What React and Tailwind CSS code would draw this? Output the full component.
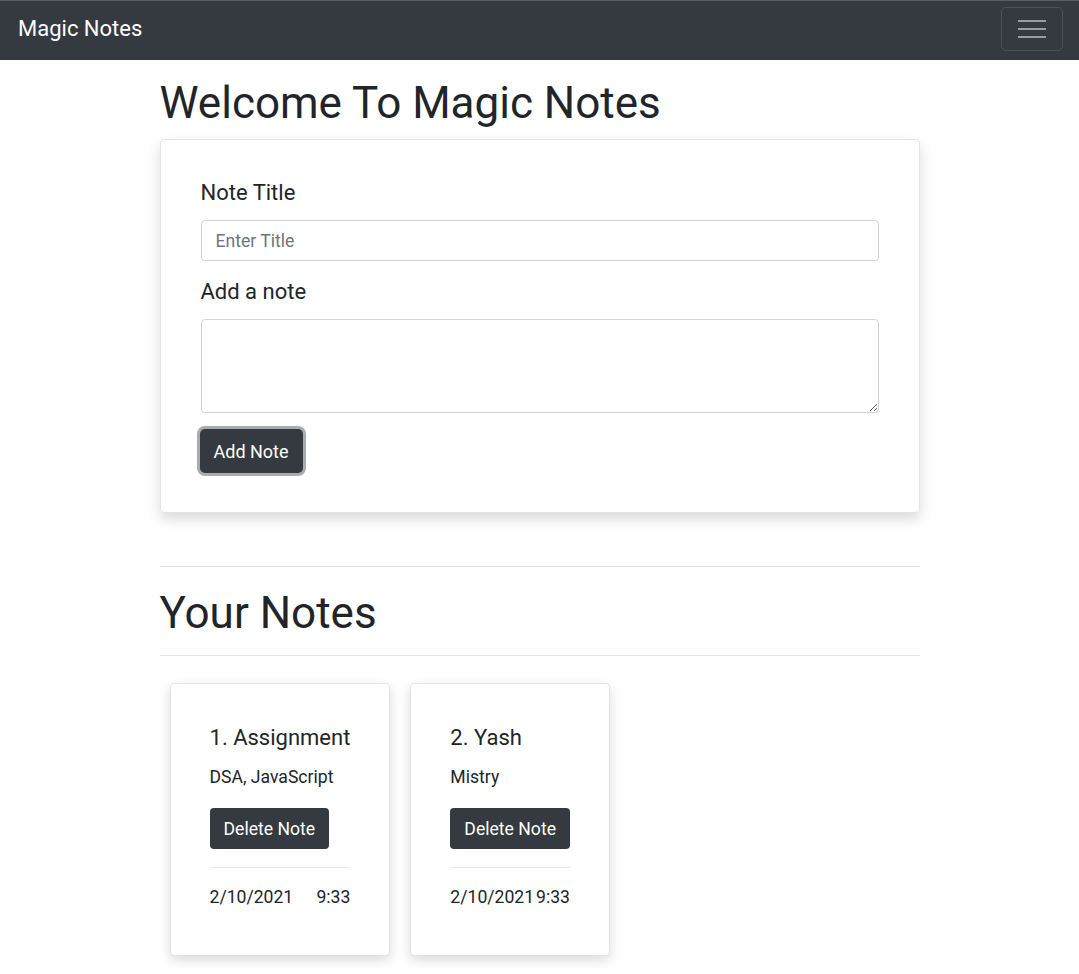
import React from 'react';

const notes = [
  { title: 'Assignment', body: 'DSA, JavaScript', date: '2/10/2021', time: '9:33' },
  { title: 'Yash', body: 'Mistry', date: '2/10/2021', time: '9:33' },
];

function NoteCard({ note, index }) {
  return (
    <div className="m-[10px] rounded-[4px] border border-[#e3e3e3] bg-white shadow-[0_4px_12px_rgba(0,0,0,0.15)] pl-[39px] pr-[39px] pt-[41px] pb-[45px]">
      <h5 className="text-[22px] leading-[26px] mb-[13px]">{index + 1}. {note.title}</h5>
      <p className="text-[17.6px] leading-[26px] mb-[18px]">{note.body}</p>
      <button className="h-[41px] px-[14px] rounded-[4px] bg-[#343a40] text-white text-[17.6px] leading-[26px]">Delete Note</button>
      <hr className="border-t border-[#e9e9e9] mt-[18px] mb-[16px]" />
      <div className="flex justify-between text-[17.6px] leading-[26px]">
        <span>{note.date}</span>
        <span>{note.time}</span>
      </div>
    </div>
  );
}

export default function App() {
  return (
    <div className="min-h-screen bg-white text-[#212529] font-['Roboto',sans-serif]">
      <nav className="h-[60px] bg-[#343a40] border-t border-[#5a5f64] flex items-center justify-between pl-[18px] pr-[16px] pb-[4px]">
        <span className="text-white text-[22px] leading-none">Magic Notes</span>
        <button className="w-[62px] h-[44px] rounded-[5px] border border-[#4d5257] flex flex-col items-center justify-center gap-[6px]">
          <span className="block w-[28px] h-[2px] bg-[#9a9da0]"></span>
          <span className="block w-[28px] h-[2px] bg-[#9a9da0]"></span>
          <span className="block w-[28px] h-[2px] bg-[#9a9da0]"></span>
        </button>
      </nav>

      <main className="w-[760px] mx-auto">
        <h1 className="text-[44px] leading-[52px] mt-[17px] mb-[10px]">Welcome To Magic Notes</h1>

        <div className="rounded-[4px] border border-[#e3e3e3] shadow-[0_6px_14px_rgba(0,0,0,0.15)] px-10 pt-[40px] pb-[39px]">
          <label className="block text-[22px] leading-[26px] mb-[14px]">Note Title</label>
          <input
            className="w-full h-[41px] px-[14px] rounded-[4px] border border-[#ced4da] text-[17.6px] placeholder:text-[#6c757d] outline-none"
            placeholder="Enter Title"
          />
          <label className="block text-[22px] leading-[26px] mt-[18px] mb-[14px]">Add a note</label>
          <textarea className="w-full h-[94px] rounded-[4px] border border-[#ced4da] block outline-none resize-y"></textarea>
          <button className="mt-[16px] h-[44px] px-[14px] rounded-[5px] bg-[#343a40] text-white text-[18px] ring-[3px] ring-[#a9acaf] -ml-px">
            Add Note
          </button>
        </div>

        <hr className="border-t border-[#e3e3e3] mt-[53px]" />
        <h1 className="text-[44px] leading-[52px] mt-[20px] mb-[16px]">Your Notes</h1>
        <hr className="border-t border-[#e3e3e3]" />

        <div className="flex flex-wrap items-start mt-[17px]">
          {notes.map((n, i) => (
            <NoteCard key={i} note={n} index={i} />
          ))}
        </div>
      </main>
    </div>
  );
}
